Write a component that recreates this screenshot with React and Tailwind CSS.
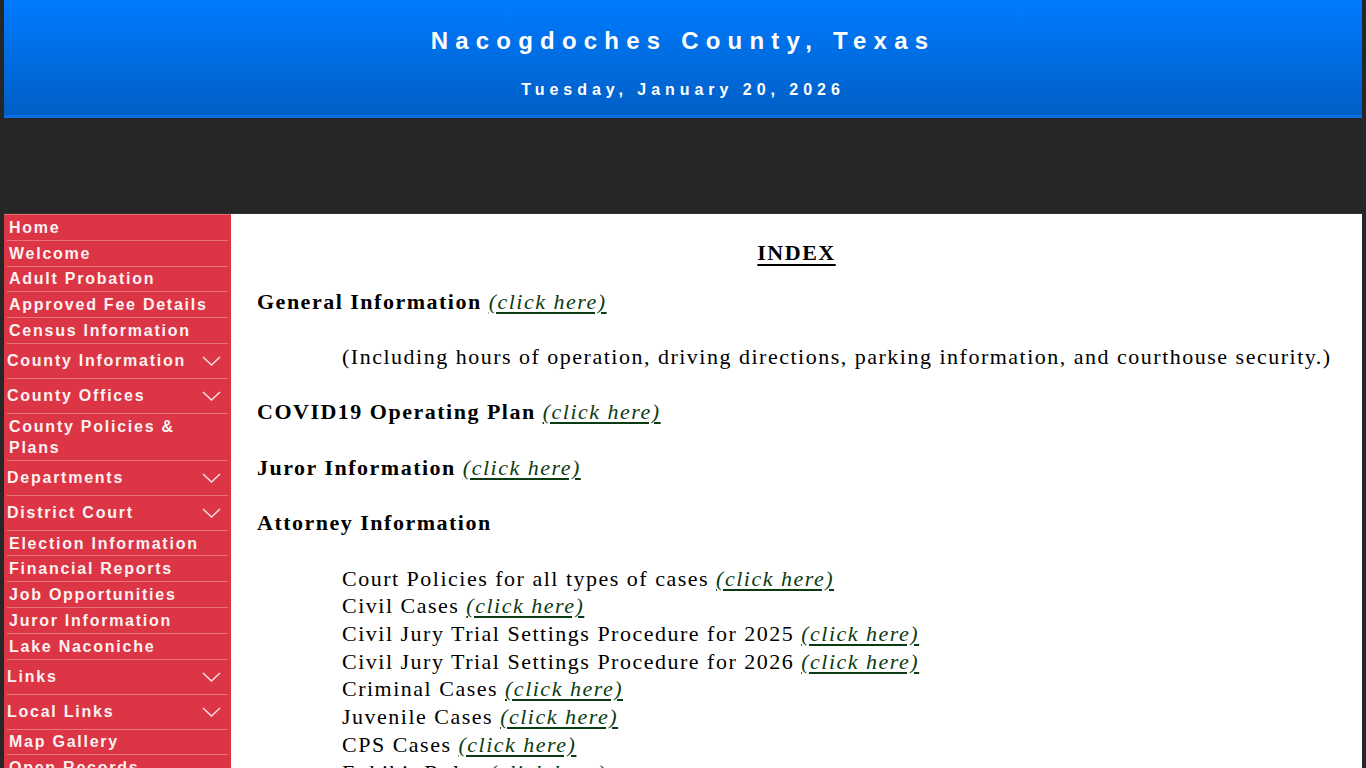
import React from 'react';

const menu = [
    { label: 'Home' },
    { label: 'Welcome' },
    { label: 'Adult Probation' },
    { label: 'Approved Fee Details' },
    { label: 'Census Information' },
    { label: 'County Information', drop: true },
    { label: 'County Offices', drop: true },
    { label: 'County Policies & Plans' },
    { label: 'Departments', drop: true },
    { label: 'District Court', drop: true },
    { label: 'Election Information' },
    { label: 'Financial Reports' },
    { label: 'Job Opportunities' },
    { label: 'Juror Information' },
    { label: 'Lake Naconiche' },
    { label: 'Links', drop: true },
    { label: 'Local Links', drop: true },
    { label: 'Map Gallery' },
    { label: 'Open Records' },
    { label: 'Public Notices' },
];

const attorneyLinks = [
    'Court Policies for all types of cases',
    'Civil Cases',
    'Civil Jury Trial Settings Procedure for 2025',
    'Civil Jury Trial Settings Procedure for 2026',
    'Criminal Cases',
    'Juvenile Cases',
    'CPS Cases',
    'Exhibit Rules',
    'Family Law Cases',
];

function Chevron() {
    return (
        <svg width="19" height="10" viewBox="0 0 19 10" fill="none" className="shrink-0">
            <polyline points="1,1 9.5,9 18,1" stroke="#f6dfe2" strokeWidth="1.5" />
        </svg>
    );
}

function ClickHere() {
    return (
        <a href="#" className="italic font-normal text-[#0b3b12] underline decoration-[#0b3b12] underline-offset-[3px]">
            (click here)
        </a>
    );
}

export default function App() {
    return (
        <div className="min-h-screen bg-[#262626] px-[4px]">
            {/* banner */}
            <header className="h-[118px] bg-gradient-to-b from-[#007bff] to-[#005fc6] border-b-[3px] border-[#0a6ee0] text-center text-white font-['Liberation_Sans',Arial,sans-serif] font-bold">
                <div className="pt-[26px] text-[24px] leading-[30px] tracking-[0.3em]">Nacogdoches County, Texas</div>
                <div className="mt-[24px] text-[16px] leading-[20px] tracking-[0.31em]">Tuesday, January 20, 2026</div>
            </header>

            <div className="h-[96px] border-b border-[#333]" />

            <div className="flex">
                {/* menu lateral */}
                <nav className="w-[227px] shrink-0 bg-[#dc3545] px-[3px] border-t border-[#e56672] font-['Liberation_Sans',Arial,sans-serif] font-bold text-[16px] tracking-[1.75px] text-[#fbf1f2]">
                    {menu.map((item) =>
                        item.drop ? (
                            <div key={item.label} className="flex items-center justify-between h-[35px] border-b border-[#e8737e] pr-[7px]">
                                <span className="leading-[21px]">{item.label}</span>
                                <Chevron />
                            </div>
                        ) : (
                            <div key={item.label} className="pl-[2px] py-[1.9px] leading-[21px] border-b border-[#e8737e]">
                                {item.label}
                            </div>
                        )
                    )}
                </nav>

                {/* contenido */}
                <main className="flex-1 bg-white pl-[26px] pr-[20px] pt-[25px] pb-10 font-['Liberation_Serif','Times_New_Roman',serif] text-[22px] leading-[27.7px] tracking-[1.5px] text-black">
                    <div className="text-center font-bold underline underline-offset-[4px] mb-[21px] pr-[6px]">INDEX</div>

                    <p className="font-bold">General Information <ClickHere /></p>
                    <p className="mt-[27.7px] pl-[85px]">(Including hours of operation, driving directions, parking information, and courthouse security.)</p>

                    <p className="mt-[27.7px] font-bold">COVID19 Operating Plan <ClickHere /></p>

                    <p className="mt-[27.7px] font-bold">Juror Information <ClickHere /></p>

                    <p className="mt-[27.7px] font-bold">Attorney Information</p>

                    <div className="mt-[27.7px] pl-[85px]">
                        {attorneyLinks.map((t) => (
                            <div key={t}>{t} <ClickHere /></div>
                        ))}
                    </div>
                </main>
            </div>
        </div>
    );
}
